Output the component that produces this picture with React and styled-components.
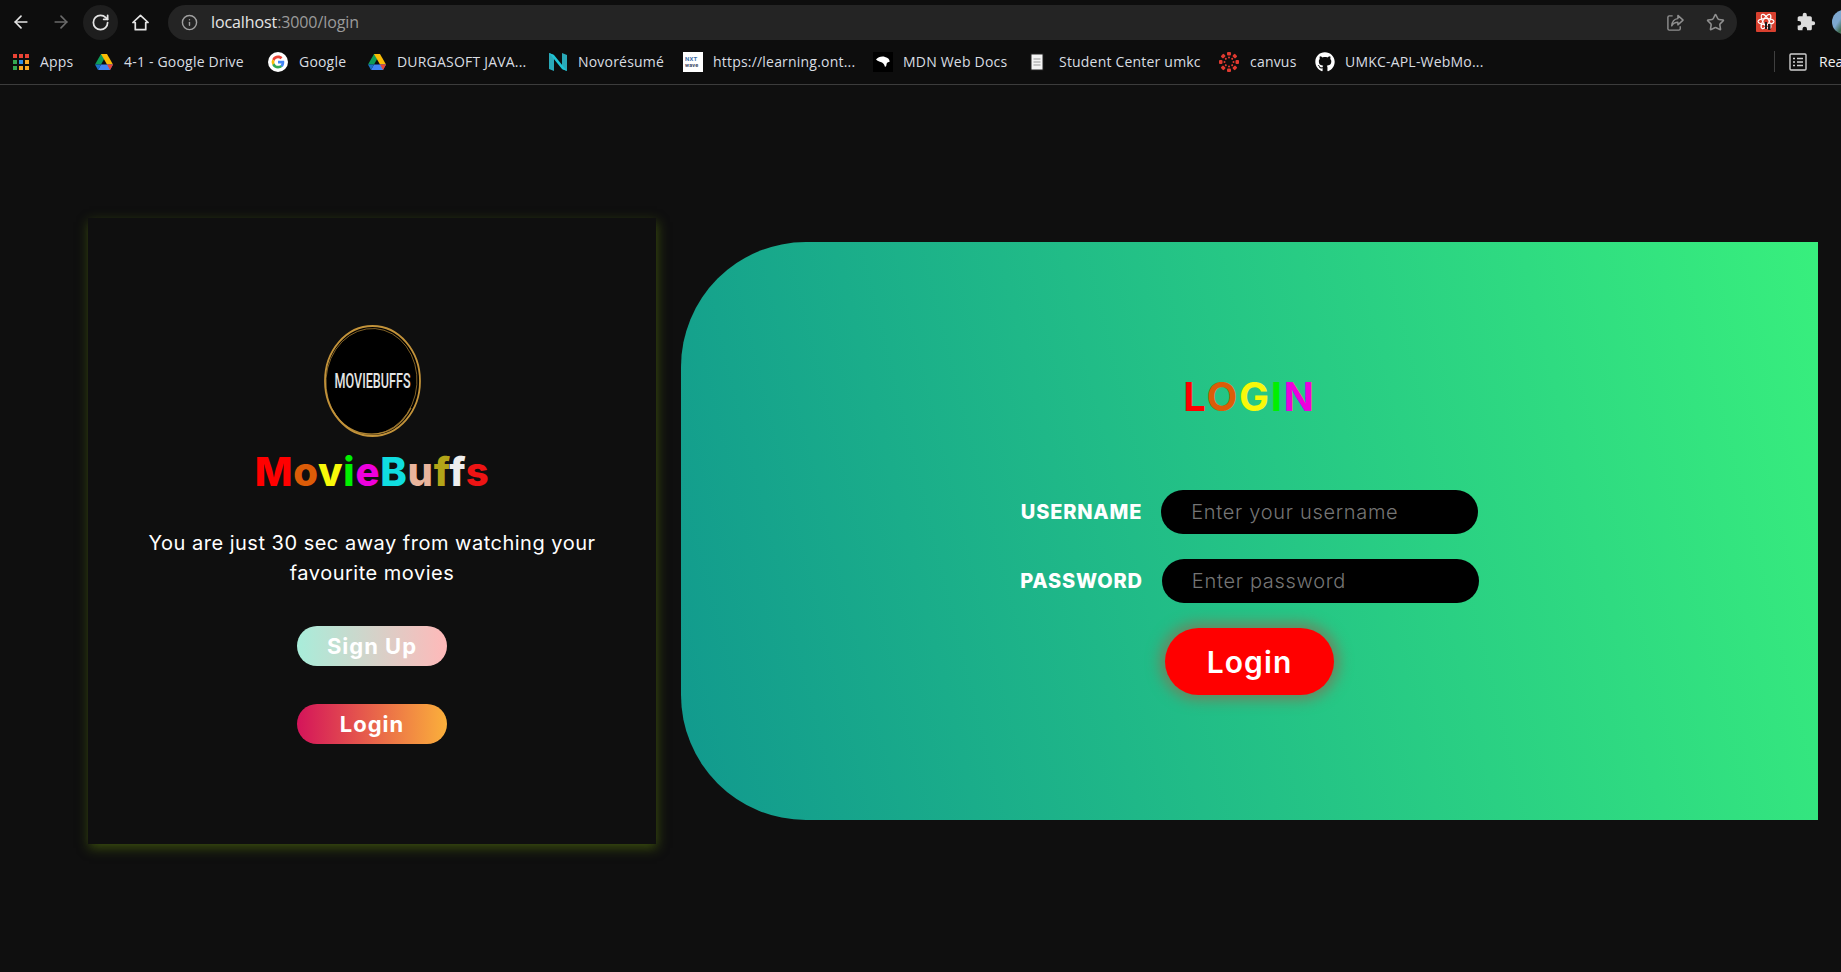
import React from 'react';
import styled, { createGlobalStyle } from 'styled-components';
import { ArrowLeft, ArrowRight, RotateCw, Info, Star } from 'lucide-react';
import { FaGithub } from 'react-icons/fa';

const GlobalStyle = createGlobalStyle`
  * {
    padding: 0;
    margin: 0;
    box-sizing: border-box;
  }
  html, body {
    height: 100%;
    overflow: hidden;
    background: #0f0f0f;
  }
`;

const Page = styled.div`
  width: 1841px;
  height: 972px;
  display: flex;
  flex-direction: column;
  background: #0f0f0f;
  overflow: hidden;
`;

/* browser chrome */
const Chrome = styled.header`
  height: 85px;
  flex: none;
  background: #0d0d0d;
  border-bottom: 1px solid #3c3c3c;
  font-family: "Open Sans", sans-serif;
`;

const Toolbar = styled.div`
  height: 43px;
  display: flex;
  align-items: center;
  padding: 1px 0 0 3px;
`;

const NavButton = styled.div`
  width: 35px;
  height: 35px;
  margin-right: 5px;
  flex: none;
  display: flex;
  align-items: center;
  justify-content: center;
  border-radius: 50%;
  color: ${(p) => (p.$off ? '#6a6a6a' : '#e4e4e4')};
  background: ${(p) => (p.$hover ? '#1e1e1e' : 'transparent')};
`;

const Omnibox = styled.div`
  width: 1569px;
  height: 35px;
  margin-left: 5px;
  flex: none;
  display: flex;
  align-items: center;
  padding: 0 12px 0 13px;
  border-radius: 18px;
  background: #242424;
  color: #a0a0a0;
`;

const Url = styled.div`
  flex: 1;
  margin-left: 13px;
  font-size: 16px;
  letter-spacing: -0.1px;
  color: #9b9b9b;
  span {
    color: #e6e6e6;
  }
`;

const OmniIcon = styled.div`
  width: 20px;
  height: 20px;
  margin-left: ${(p) => p.$gap || 0}px;
  display: flex;
  align-items: center;
  justify-content: center;
  color: #8f8f8f;
`;

const ExtRow = styled.div`
  display: flex;
  align-items: center;
  margin-left: 19px;
  flex: none;
  color: #dcdcdc;
`;

const PuzzleIcon = styled.svg`
  margin: 0 16px 0 20px;
`;

const Avatar = styled.div`
  width: 24px;
  height: 24px;
  flex: none;
  border-radius: 50%;
  background: linear-gradient(125deg, #7da7cf 0 35%, #3f6b52 55%, #c9d3da);
`;

const Bookmarks = styled.nav`
  height: 41px;
  display: flex;
  align-items: center;
  padding: 0 0 4px 13px;
  white-space: nowrap;
  overflow: hidden;
`;

const Bookmark = styled.div`
  width: ${(p) => p.$w}px;
  flex: none;
  display: flex;
  align-items: center;
  gap: ${(p) => p.$gap}px;
  font-size: 14px;
  letter-spacing: 0.2px;
  color: #d9dde2;
  svg {
    flex: none;
  }
`;

const Divider = styled.div`
  width: 1px;
  height: 21px;
  flex: none;
  background: #3f3f3f;
`;

const ReadingList = styled.div`
  margin-left: 14px;
  display: flex;
  align-items: center;
  gap: 12px;
  font-size: 14px;
  color: #f2f2f2;
`;

/* login page */
const Main = styled.main`
  flex: 1;
  display: flex;
  align-items: flex-start;
  gap: 25px;
  padding: 133px 23px 0 88px;
  font-family: Inter, sans-serif;
  color: #fff;
`;

const WelcomeCard = styled.section`
  width: 568px;
  height: 626px;
  flex: none;
  display: flex;
  flex-direction: column;
  align-items: center;
  padding-top: 107px;
  background: #0f0f0f;
  box-shadow: 1px 4px 11px #3a4d0e;
`;

const Brand = styled.h1`
  margin-top: 12px;
  font-size: 40px;
  line-height: 46px;
  font-weight: 800;
  letter-spacing: 0.75px;
`;

const Letter = styled.span`
  color: ${(p) => p.$color};
`;

const Tagline = styled.p`
  width: 480px;
  margin-top: 33px;
  text-align: center;
  font-size: 20px;
  line-height: 30px;
  letter-spacing: 0.5px;
`;

const GradientButton = styled.button`
  width: 150px;
  height: 40px;
  margin-top: ${(p) => p.$top}px;
  border: 0;
  border-radius: 20px;
  font-family: inherit;
  font-size: 22px;
  font-weight: 700;
  letter-spacing: 1px;
  color: #fff;
  background: linear-gradient(to right, ${(p) => p.$from}, ${(p) => p.$to});
`;

const FormPanel = styled.section`
  width: 1137px;
  height: 578px;
  margin-top: 24px;
  flex: none;
  display: flex;
  flex-direction: column;
  align-items: center;
  padding-top: 131px;
  border-radius: 125px 0 0 125px;
  background: linear-gradient(76deg, #11998e, #38ef7d);
`;

const FormTitle = styled.h2`
  font-size: 40px;
  line-height: 48px;
  font-weight: 700;
  letter-spacing: 1.7px;
`;

const Field = styled.label`
  display: flex;
  align-items: center;
  gap: 19px;
  margin-top: ${(p) => p.$top}px;
`;

const FieldName = styled.span`
  font-size: 20px;
  font-weight: 800;
  letter-spacing: 0.8px;
  color: #fff;
`;

const TextInput = styled.input`
  width: 317px;
  height: 44px;
  padding: 0 30px;
  border: 0;
  border-radius: 22px;
  outline: none;
  background: #000;
  color: #fff;
  font-family: inherit;
  font-size: 20px;
  font-weight: 300;
  letter-spacing: 0.7px;
  &::placeholder {
    color: #757575;
    opacity: 1;
  }
`;

const SubmitButton = styled.button`
  width: 169px;
  height: 67px;
  margin-top: 25px;
  border: 0;
  border-radius: 34px;
  background: #ff0000;
  color: #fff;
  font-family: inherit;
  font-size: 30px;
  font-weight: 600;
  letter-spacing: 1.1px;
  box-shadow: 0 0 14px 5px #6d8560;
`;

const brandColors = ['#ff0000', '#dc5c08', '#f8f80a', '#00f000', '#ee00dd', '#10dde0', '#e9b49c', '#b3a518', '#eeeeee', '#ee1414'];
const loginColors = ['#ff0000', '#dc5c08', '#f8f80a', '#00f000', '#ee00dd'];

const appColors = [
  ['#ea4335', '#ea4335', '#ea4335'],
  ['#34a853', '#2f8fe8', '#f9a825'],
  ['#34a853', '#f9a825', '#f9a825'],
];

function Rainbow({ text, colors }) {
  return text.split('').map((c, i) => (
    <Letter key={i} $color={colors[i]}>{c}</Letter>
  ));
}

const AppsIcon = () => (
  <svg width="16" height="16" viewBox="0 0 16 16">
    {[0, 6, 12].map((y, r) =>
      [0, 6, 12].map((x, c) => (
        <rect key={`${r}${c}`} x={x} y={y} width="4" height="4" fill={appColors[r][c]} />
      ))
    )}
  </svg>
);

const DriveIcon = () => (
  <svg width="18" height="16" viewBox="0 0 18 16">
    <path d="M6 0h6l-6 10.500H0z" fill="#0f9d58" />
    <path d="M6 0h6l6 10.500h-6z" fill="#fbbc05" />
    <path d="M3 16l3-5.500h12L15 16z" fill="#4285f4" />
    <path d="M0 10.500h6L3 16z" fill="#1a73c8" />
    <path d="M12 10.500h6L15 16z" fill="#ea4335" />
  </svg>
);

const GoogleIcon = () => (
  <svg width="20" height="20" viewBox="0 0 48 48">
    <circle cx="24" cy="24" r="24" fill="#fff" />
    <path fill="#ea4335" d="M24 15c2.400 0 4.500.8 6.200 2.400l4.600-4.600C32 10.200 28.300 8.600 24 8.600c-6 0-11.200 3.400-13.800 8.500l5.400 4.200C16.800 17.700 20.100 15 24 15z" />
    <path fill="#4285f4" d="M39 24.400c0-1.200-.1-2.300-.3-3.400H24v6.400h8.400c-.4 2-1.500 3.600-3.100 4.700l5.200 4c3-2.800 4.500-6.900 4.500-11.700z" />
    <path fill="#fbbc05" d="M15.600 26.700a9.300 9.300 0 0 1 0-5.400l-5.400-4.200a15.400 15.400 0 0 0 0 13.800z" />
    <path fill="#34a853" d="M24 39.400c4.200 0 7.700-1.400 10.300-3.800l-5-3.900c-1.400.9-3.200 1.500-5.300 1.500-3.900 0-7.200-2.700-8.400-6.300l-5.400 4.200c2.600 5 7.800 8.300 13.800 8.300z" />
  </svg>
);

const NovoIcon = () => (
  <svg width="20" height="20" viewBox="0 0 20 20">
    <path d="M1 1l5 2v16l-5-2zM14 1l5 2v16l-5-2z" fill="#2aa9b8" />
    <path d="M1 1l5 2 13 16-5-2z" fill="#1fc4d6" />
  </svg>
);

const NxtIcon = () => (
  <svg width="20" height="20" viewBox="0 0 20 20" fontFamily="Roboto, sans-serif" fontWeight="700" fontSize="6">
    <rect width="20" height="20" fill="#fff" />
    <text x="2" y="9" fill="#3c6ea8">NXT</text>
    <text x="2" y="15" fill="#3d4a66" fontSize="5.500">wave</text>
  </svg>
);

const MdnIcon = () => (
  <svg width="20" height="20" viewBox="0 0 20 20">
    <rect width="20" height="20" fill="#000" />
    <path d="M3 7.500C5 5 9 4 12 5c3 .8 5 2.500 4.500 5-1.500-.3-3 .5-3 2.500 0 1-.5 2-1.500 2.500-.5-2-1-3-3-4.500C7.500 9.500 5 9.500 3 7.500z" fill="#fff" />
  </svg>
);

const DocIcon = () => (
  <svg width="14" height="18" viewBox="0 0 14 18">
    <rect x="1" y="1" width="12" height="16" fill="#f4f4f4" stroke="#222" />
    <path d="M3.500 6h7M3.500 9h7M3.500 12h7" stroke="#999" />
  </svg>
);

const CanvasIcon = () => (
  <svg width="20" height="20" viewBox="0 0 20 20" fill="#e03a30">
    {[0, 45, 90, 135, 180, 225, 270, 315].map((a) => (
      <g key={a} transform={`rotate(${a} 10 10)`}>
        <rect x="8" y="0" width="4" height="3.500" rx="1" />
        <circle cx="10" cy="5.500" r="1" />
      </g>
    ))}
  </svg>
);

const HomeIcon = () => (
  <svg width="19" height="19" viewBox="0 0 20 20" fill="none" stroke="currentColor" strokeWidth="1.800" strokeLinejoin="round">
    <path d="M10 2.500L18 10h-2.500v7.500h-11V10H2z" />
  </svg>
);

const ShareIcon = () => (
  <svg width="19" height="19" viewBox="0 0 20 20" fill="none" stroke="currentColor" strokeWidth="1.500" strokeLinejoin="round">
    <path d="M7 3H3.500A1.500 1.500 0 0 0 2 4.500v12A1.500 1.500 0 0 0 3.500 18h10a1.500 1.500 0 0 0 1.500-1.500V14" />
    <path d="M12.500 2.500L18 7.500l-5.500 5V9.800C9.500 9.800 7.500 11 6 13.500c.4-4.500 2.800-7.200 6.500-7.600z" />
  </svg>
);

const ReactExtIcon = () => (
  <svg width="20" height="20" viewBox="0 0 20 20">
    <rect width="20" height="20" rx="1" fill="#d8402f" />
    <g fill="none" stroke="#fff" strokeWidth="1.100">
      <ellipse cx="10" cy="9.500" rx="8" ry="3" />
      <ellipse cx="10" cy="9.500" rx="8" ry="3" transform="rotate(60 10 9.500)" />
      <ellipse cx="10" cy="9.500" rx="8" ry="3" transform="rotate(120 10 9.500)" />
    </g>
    <path d="M9 10h2v7H9zM12 12h2.500v6H12z" fill="#1c1c1c" />
  </svg>
);

const ReadingIcon = () => (
  <svg width="18" height="18" viewBox="0 0 18 18" fill="none" stroke="#cfcfcf" strokeWidth="1.400">
    <rect x="1" y="1" width="16" height="16" rx="1" />
    <path d="M4 5.500h2M8 5.500h6M4 9h2M8 9h6M4 12.500h2M8 12.500h6" />
  </svg>
);

const LogoMark = () => (
  <svg width="97" height="112" viewBox="0 0 97 112">
    <ellipse cx="48.500" cy="56" rx="47" ry="54.500" fill="#000" />
    <g fill="none" stroke="#c3933a">
      <ellipse cx="48.500" cy="56" rx="47.500" ry="55" strokeWidth="1.800" />
      <ellipse cx="47.500" cy="56.500" rx="45.500" ry="53" strokeWidth="0.900" opacity="0.7" transform="rotate(4 48 56)" />
      <path d="M8 84c10 18 24 25 40 25 16 0 30-9 39-26" strokeWidth="1.200" opacity="0.8" />
    </g>
    <text transform="translate(48.500 63) scale(0.63 1)" textAnchor="middle"
      fontFamily="Roboto, sans-serif" fontWeight="500" fontSize="20" fill="#e4e4e4">MOVIEBUFFS</text>
  </svg>
);

const bookmarks = [
  { icon: <AppsIcon />, label: 'Apps', w: 82, gap: 11 },
  { icon: <DriveIcon />, label: '4-1 - Google Drive', w: 173, gap: 11 },
  { icon: <GoogleIcon />, label: 'Google', w: 100, gap: 11 },
  { icon: <DriveIcon />, label: 'DURGASOFT JAVA...', w: 180, gap: 11 },
  { icon: <NovoIcon />, label: 'Novorésumé', w: 135, gap: 10 },
  { icon: <NxtIcon />, label: 'https://learning.ont...', w: 190, gap: 10 },
  { icon: <MdnIcon />, label: 'MDN Web Docs', w: 157, gap: 10 },
  { icon: <DocIcon />, label: 'Student Center umkc', w: 189, gap: 15 },
  { icon: <CanvasIcon />, label: 'canvus', w: 96, gap: 11 },
  { icon: <FaGithub size={20} color="#fff" />, label: 'UMKC-APL-WebMo...', w: 459, gap: 10 },
];

function App() {
  return (
    <Page>
      <GlobalStyle />
      <Chrome>
        <Toolbar>
          <NavButton><ArrowLeft size={20} /></NavButton>
          <NavButton $off><ArrowRight size={20} /></NavButton>
          <NavButton $hover><RotateCw size={19} strokeWidth={2.2} /></NavButton>
          <NavButton><HomeIcon /></NavButton>
          <Omnibox>
            <Info size={17} />
            <Url><span>localhost</span>:3000/login</Url>
            <OmniIcon><ShareIcon /></OmniIcon>
            <OmniIcon $gap={20}><Star size={19} /></OmniIcon>
          </Omnibox>
          <ExtRow>
            <ReactExtIcon />
            <PuzzleIcon width="20" height="20" viewBox="0 0 24 24" fill="currentColor">
              <path d="M20.500 11H19V7c0-1.100-.9-2-2-2h-4V3.500a2.500 2.500 0 0 0-5 0V5H4c-1.100 0-2 .9-2 2v3.800h1.500a2.700 2.700 0 0 1 0 5.400H2V20c0 1.100.9 2 2 2h3.800v-1.500a2.700 2.700 0 0 1 5.400 0V22H17c1.100 0 2-.9 2-2v-4h1.500a2.500 2.500 0 0 0 0-5z" />
            </PuzzleIcon>
            <Avatar />
          </ExtRow>
        </Toolbar>
        <Bookmarks>
          {bookmarks.map((b) => (
            <Bookmark key={b.label + b.w} $w={b.w} $gap={b.gap}>{b.icon}{b.label}</Bookmark>
          ))}
          <Divider />
          <ReadingList><ReadingIcon />Rea</ReadingList>
        </Bookmarks>
      </Chrome>

      <Main>
        <WelcomeCard>
          <LogoMark />
          <Brand><Rainbow text="MovieBuffs" colors={brandColors} /></Brand>
          <Tagline>You are just 30 sec away from watching your favourite movies</Tagline>
          <GradientButton $top={38} $from="#a8edda" $to="#ffb9b9">Sign Up</GradientButton>
          <GradientButton $top={38} $from="#d4145a" $to="#fbb03b">Login</GradientButton>
        </WelcomeCard>

        <FormPanel>
          <FormTitle><Rainbow text="LOGIN" colors={loginColors} /></FormTitle>
          <Field $top={69}>
            <FieldName>USERNAME</FieldName>
            <TextInput placeholder="Enter your username" />
          </Field>
          <Field $top={25}>
            <FieldName>PASSWORD</FieldName>
            <TextInput type="password" placeholder="Enter password" />
          </Field>
          <SubmitButton>Login</SubmitButton>
        </FormPanel>
      </Main>
    </Page>
  );
}

export default App;
